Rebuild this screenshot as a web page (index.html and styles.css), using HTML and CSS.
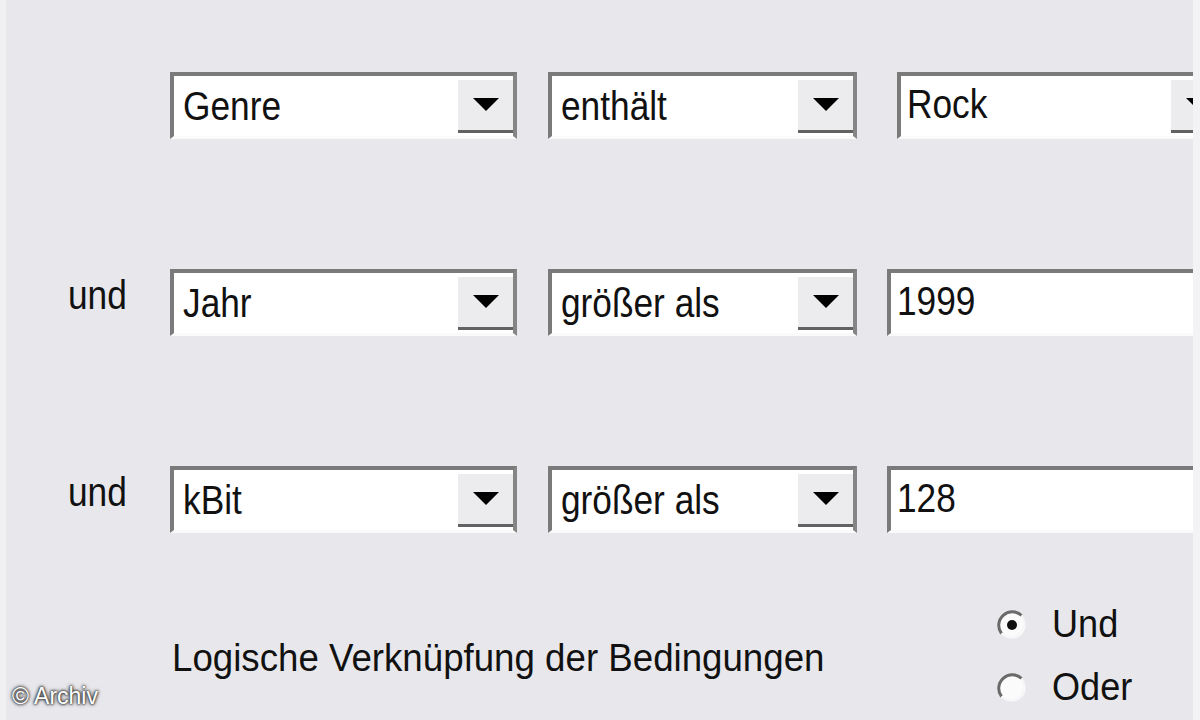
FILE: index.html
```html
<!DOCTYPE html>
<html lang="de">
<head>
<meta charset="utf-8">
<title>Bedingungen</title>
<link rel="stylesheet" href="styles.css">
</head>
<body>
<div class="page">
  <div class="main">
    <div class="row">
      <div class="lbl"></div>
      <div class="combo c1"><span class="val"><span class="t">Genre</span></span><span class="btn"><i class="tri"></i></span></div>
      <div class="combo c2"><span class="val"><span class="t">enthält</span></span><span class="btn"><i class="tri"></i></span></div>
      <div class="combo c3"><span class="val"><span class="t">Rock</span></span><span class="btn"><i class="tri"></i></span></div>
    </div>
    <div class="row">
      <div class="lbl"><span class="t">und</span></div>
      <div class="combo c1"><span class="val"><span class="t">Jahr</span></span><span class="btn"><i class="tri"></i></span></div>
      <div class="combo c2"><span class="val"><span class="t">größer als</span></span><span class="btn"><i class="tri"></i></span></div>
      <div class="edit"><span class="val"><span class="t">1999</span></span></div>
    </div>
    <div class="row">
      <div class="lbl"><span class="t">und</span></div>
      <div class="combo c1"><span class="val"><span class="t">kBit</span></span><span class="btn"><i class="tri"></i></span></div>
      <div class="combo c2"><span class="val"><span class="t">größer als</span></span><span class="btn"><i class="tri"></i></span></div>
      <div class="edit"><span class="val"><span class="t">128</span></span></div>
    </div>
    <div class="bottom">
      <div class="logic"><span class="t2 tl">Logische Verknüpfung der Bedingungen</span></div>
      <div class="radios">
        <div class="radio">
          <svg class="rb" width="32" height="32" viewBox="0 0 32 32">
            <circle cx="16" cy="16" r="13.5" fill="#fbfbfb"/>
            <path d="M5.5 24.5 A13.5 13.5 0 0 1 25.5 6.5" fill="none" stroke="#6a6a6a" stroke-width="3"/>
            <path d="M25.5 6.5 A13.5 13.5 0 0 1 5.5 24.5" fill="none" stroke="#f6f6f8" stroke-width="2"/>
            <circle cx="16" cy="16" r="5" fill="#111"/>
          </svg>
          <span class="t2">Und</span>
        </div>
        <div class="radio">
          <svg class="rb" width="32" height="32" viewBox="0 0 32 32">
            <circle cx="16" cy="16" r="13.5" fill="#fbfbfb"/>
            <path d="M5.5 24.5 A13.5 13.5 0 0 1 25.5 6.5" fill="none" stroke="#6a6a6a" stroke-width="3"/>
            <path d="M25.5 6.5 A13.5 13.5 0 0 1 5.5 24.5" fill="none" stroke="#f6f6f8" stroke-width="2"/>
          </svg>
          <span class="t2">Oder</span>
        </div>
      </div>
    </div>
  </div>
  <div class="rstrip"></div>
  <div class="mark">© Archiv</div>
</div>
</body>
</html>
```

FILE: styles.css
```css
html, body {
  margin: 0;
  padding: 0;
}
body {
  width: 1200px;
  height: 720px;
  overflow: hidden;
  background: #e8e8ec;
  font-family: "Liberation Sans", Arial, sans-serif;
  color: #111;
}
.page {
  position: relative;
  display: flex;
  width: 1200px;
  height: 720px;
  border-left: 6px solid #f0f0f2;
  box-sizing: border-box;
}
.main {
  width: 1187px;
  flex: 0 0 1187px;
  overflow: hidden;
  padding-top: 72px;
  box-sizing: border-box;
  display: flex;
  flex-direction: column;
  gap: 131px;
}
.rstrip {
  flex: 1 1 auto;
  background: #f3f3f5;
}
.row {
  display: flex;
  align-items: center;
  height: 66px;
}
.t {
  display: inline-block;
  white-space: nowrap;
  transform: scaleX(0.86);
  transform-origin: left center;
}
.t2 {
  display: inline-block;
  white-space: nowrap;
  transform: scaleX(0.95);
  transform-origin: left center;
}
.tl { transform: scaleX(0.965); }
.lbl {
  flex: 0 0 164px;
  box-sizing: border-box;
  padding-left: 62px;
  font-size: 41px;
  padding-bottom: 14px;
}
.combo, .edit {
  flex: 0 0 auto;
  height: 67px;
  box-sizing: border-box;
  background: #fff;
  display: flex;
  align-items: stretch;
  border-top: 4px solid #7a7a7a;
  border-left: 4px solid #7a7a7a;
  border-bottom: 3px solid #fafafa;
}
.combo {
  border-right: 4px solid #858585;
  padding: 4px 0 3px 0;
}
.c1 { width: 347px; margin-right: 31px; }
.c2 { width: 309px; }
.c3 { width: 333px; margin-left: 40px; }
.edit { width: 340px; margin-left: 30px; padding: 4px 0 3px 0; }
.val {
  flex: 1 1 auto;
  display: flex;
  align-items: center;
  padding-left: 9px;
  font-size: 41px;
  line-height: 1;
  overflow: hidden;
}
.c3 .val, .edit .val { padding-left: 6px; padding-bottom: 4px; }
.btn {
  flex: 0 0 55px;
  background: #ececee;
  border-bottom: 3px solid #626262;
  display: flex;
  align-items: center;
  justify-content: center;
}
.tri {
  display: block;
  width: 0;
  height: 0;
  border-left: 13px solid transparent;
  border-right: 13px solid transparent;
  border-top: 13px solid #000;
}
.bottom {
  margin-top: -70px;
  display: flex;
  align-items: center;
}
.logic {
  flex: 0 0 990px;
  box-sizing: border-box;
  padding-left: 166px;
  font-size: 38px;
  padding-top: 4px;
}
.radios {
  display: flex;
  flex-direction: column;
}
.radio {
  height: 63px;
  display: flex;
  align-items: center;
  gap: 24px;
  font-size: 38px;
}
.rb { flex: 0 0 32px; }
.mark {
  position: absolute;
  left: 6px;
  bottom: 10px;
  font-size: 23px;
  color: #fff;
  text-shadow: 0 0 2px #222, 0 0 3px #333, 0 0 4px #444;
}
```
